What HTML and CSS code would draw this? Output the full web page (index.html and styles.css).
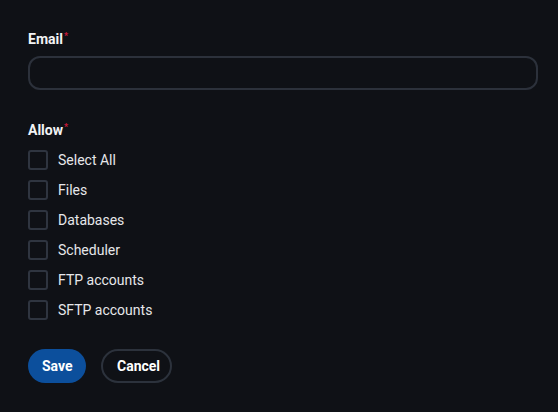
FILE: index.html
```html
<!DOCTYPE html>
<html>
<head>
<meta charset="utf-8">
<link rel="stylesheet" href="styles.css">
</head>
<body>
<form class="form">
  <div class="field">
    <label class="label">Email<span class="req">*</span></label>
    <input class="input" type="text">
  </div>
  <div class="field allow">
    <div class="label">Allow<span class="req">*</span></div>
    <div class="checks">
      <label class="check"><span class="box"></span><span>Select All</span></label>
      <label class="check"><span class="box"></span><span>Files</span></label>
      <label class="check"><span class="box"></span><span>Databases</span></label>
      <label class="check"><span class="box"></span><span>Scheduler</span></label>
      <label class="check"><span class="box"></span><span>FTP accounts</span></label>
      <label class="check"><span class="box"></span><span>SFTP accounts</span></label>
    </div>
  </div>
  <div class="actions">
    <button type="button" class="btn primary">Save</button>
    <button type="button" class="btn outline">Cancel</button>
  </div>
</form>
</body>
</html>
```
FILE: styles.css
```css
html, body {
  margin: 0;
  background: #0f1116;
}
body {
  padding: 31px 20px 0 28px;
  font-family: Roboto, "Liberation Sans", sans-serif;
  color: #e8e9eb;
}
.form {
  display: flex;
  flex-direction: column;
}
.field {
  display: flex;
  flex-direction: column;
}
.label {
  font-size: 14px;
  font-weight: 700;
  color: #f2f3f5;
  line-height: 17px;
}
.req {
  color: #d11a3a;
  font-size: 9px;
  vertical-align: top;
  position: relative;
  top: -3px;
  margin-left: 1px;
}
.input {
  margin-top: 8px;
  box-sizing: border-box;
  width: 510px;
  height: 34px;
  border: 2px solid #2c313b;
  border-radius: 12px;
  background: transparent;
  outline: none;
  color: #fff;
}
.allow {
  margin-top: 32px;
}
.checks {
  margin-top: 11px;
  display: flex;
  flex-direction: column;
  gap: 10px;
}
.check {
  display: flex;
  align-items: center;
  gap: 10px;
  font-size: 14px;
  color: #e6e7ea;
  height: 20px;
}
.box {
  box-sizing: border-box;
  width: 20px;
  height: 20px;
  border: 2px solid #2f3540;
  border-radius: 3px;
}
.actions {
  margin-top: 29px;
  display: flex;
  gap: 15px;
}
.btn {
  box-sizing: border-box;
  height: 34px;
  border-radius: 17px;
  font-family: Roboto, "Liberation Sans", sans-serif;
  font-size: 14px;
  font-weight: 700;
  color: #fff;
  padding: 0 14px;
  cursor: pointer;
}
.primary {
  background: #0c4f9c;
  border: none;
  width: 58px;
}
.outline {
  background: transparent;
  border: 2px solid #2c323c;
  width: 71px;
}
```
